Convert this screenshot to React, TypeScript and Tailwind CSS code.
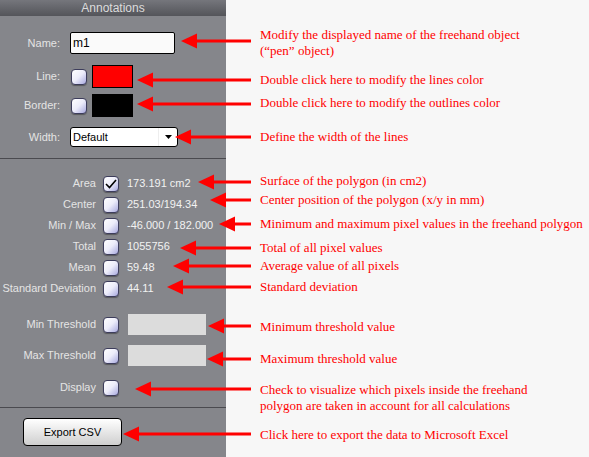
const arrows: [number, number][] = [
  [181, 41],
  [137, 80],
  [137, 104],
  [175, 137],
  [198, 182],
  [210, 200],
  [219, 224],
  [180, 248],
  [173, 266],
  [167, 287],
  [208, 326],
  [207, 359],
  [135, 389],
  [123, 434],
];

function Check({ checked = false }: { checked?: boolean }) {
  return (
    <div className="w-4 h-4 shrink-0 rounded-[4px] border border-[#3d3d5c] bg-linear-to-br from-white via-[#ececfa] to-[#a9a9de] shadow-[0_1px_1px_rgba(0,0,0,0.35)] flex items-center justify-center">
      {checked && (
        <svg width="12" height="10" viewBox="0 0 12 10">
          <path d="M1 5 L4.5 8.5 L11 1" fill="none" stroke="black" strokeWidth="1.6" />
        </svg>
      )}
    </div>
  );
}

function Stat({ label, value, checked }: { label: string; value: string; checked?: boolean }) {
  return (
    <div className="flex items-center h-[21px]">
      <span className="w-[96px] text-right">{label}</span>
      <div className="ml-[7px]">
        <Check checked={checked} />
      </div>
      <span className="ml-[8px] text-[#f2f2f2]">{value}</span>
    </div>
  );
}

function Threshold({ label, className }: { label: string; className: string }) {
  return (
    <div className={"flex items-center h-[21px] " + className}>
      <span className="w-[96px] text-right">{label}</span>
      <div className="ml-[7px]">
        <Check />
      </div>
      <div className="ml-[9px] w-[78px] h-[21px] bg-[#dcdcdc]" />
    </div>
  );
}

export default function App() {
  return (
    <div className="relative w-[589px] h-[457px] bg-[#f7f7f7] flex overflow-hidden">
      {/* panel */}
      <div className="w-[226px] h-full bg-[#85868b] flex flex-col text-[11px] text-[#e4e4e4] font-['Liberation_Sans',Arial,sans-serif]">
        <div className="h-4 bg-linear-to-b from-[#75767c] to-[#54555a] text-center text-[12px] leading-4 text-[#dcdcdc]">
          Annotations
        </div>

        <div className="flex flex-col border-b border-[#4a4a4f] pb-[11px]">
          <div className="flex items-center mt-4 h-[22px]">
            <span className="w-[60px] text-right">Name:</span>
            <div className="ml-[10px] w-[105px] h-[22px] bg-[#fafafa] border border-black rounded-[2px] pl-[2px] text-black text-[12px] leading-5">
              m1
            </div>
          </div>
          <div className="flex items-center mt-[11px] h-[23px]">
            <span className="w-[60px] text-right">Line:</span>
            <div className="ml-[11px]">
              <Check />
            </div>
            <div className="ml-[5px] w-[41px] h-[23px] bg-[#ff0000] border border-black" />
          </div>
          <div className="flex items-center mt-[6px] h-[23px]">
            <span className="w-[60px] text-right">Border:</span>
            <div className="ml-[11px]">
              <Check />
            </div>
            <div className="ml-[5px] w-[41px] h-[23px] bg-black border border-black" />
          </div>
          <div className="flex items-center mt-[10px] h-5">
            <span className="w-[60px] text-right">Width:</span>
            <div className="ml-[10px] w-[108px] h-5 bg-white border border-black rounded-[3px] flex items-center text-black">
              <span className="flex-1 pl-[2px] text-[11px]">Default</span>
              <div className="w-[19px] h-full border-l border-[#eeeeee] flex items-center justify-center">
                <svg width="7" height="4" viewBox="0 0 7 4">
                  <path d="M0 0 H7 L3.5 4 Z" fill="black" />
                </svg>
              </div>
            </div>
          </div>
        </div>

        <div className="flex flex-col pt-[14px] border-b border-[#4a4a4f] pb-[9px]">
          <Stat label="Area" value="173.191 cm2" checked />
          <Stat label="Center" value="251.03/194.34" />
          <Stat label="Min / Max" value="-46.000 / 182.000" />
          <Stat label="Total" value="1055756" />
          <Stat label="Mean" value="59.48" />
          <Stat label="Standard Deviation" value="44.11" />
          <Threshold label="Min Threshold" className="mt-[15px]" />
          <Threshold label="Max Threshold" className="mt-[10px]" />
          <div className="flex items-center h-[21px] mt-[11px]">
            <span className="w-[96px] text-right">Display</span>
            <div className="ml-[7px]">
              <Check />
            </div>
          </div>
        </div>

        <div className="pt-[10px] pl-[23px]">
          <button className="w-[99px] h-7 rounded-[4px] border border-black bg-linear-to-b from-white to-[#cfcfcf] text-black text-[11px]">
            Export CSV
          </button>
        </div>
      </div>

      {/* annotations */}
      <div className="flex-1 pl-[34px] flex flex-col text-[13px] leading-4 text-[#ff0000] whitespace-nowrap font-['Liberation_Serif','Times_New_Roman',serif]">
        <p className="mt-[27px]">
          Modify the displayed name of the freehand object
          <br />
          (“pen” object)
        </p>
        <p className="mt-[13px]">Double click here to modify the lines color</p>
        <p className="mt-[7px]">Double click here to modify the outlines color</p>
        <p className="mt-[18px]">Define the width of the lines</p>
        <p className="mt-[28px]">Surface of the polygon (in cm2)</p>
        <p className="mt-[3px]">Center position of the polygon (x/y in mm)</p>
        <p className="mt-2">Minimum and maximum pixel values in the freehand polygon</p>
        <p className="mt-2">Total of all pixel values</p>
        <p className="mt-[2px]">Average value of all pixels</p>
        <p className="mt-[5px]">Standard deviation</p>
        <p className="mt-6">Minimum threshold value</p>
        <p className="mt-4">Maximum threshold value</p>
        <p className="mt-[15px]">
          Check to visualize which pixels inside the freehand
          <br />
          polygon are taken in account for all calculations
        </p>
        <p className="mt-[13px]">Click here to export the data to Microsoft Excel</p>
      </div>

      {/* arrows overlay */}
      <svg className="absolute inset-0 pointer-events-none" width="589" height="457">
        {arrows.map(([x, y], i) => (
          <g key={i} fill="#ff0000">
            <rect x={x + 12} y={y - 1.5} width={251 - x - 12} height={3} />
            <path d={`M${x} ${y} L${x + 16} ${y - 7.5} L${x + 16} ${y + 7.5} Z`} />
          </g>
        ))}
      </svg>
    </div>
  );
}
